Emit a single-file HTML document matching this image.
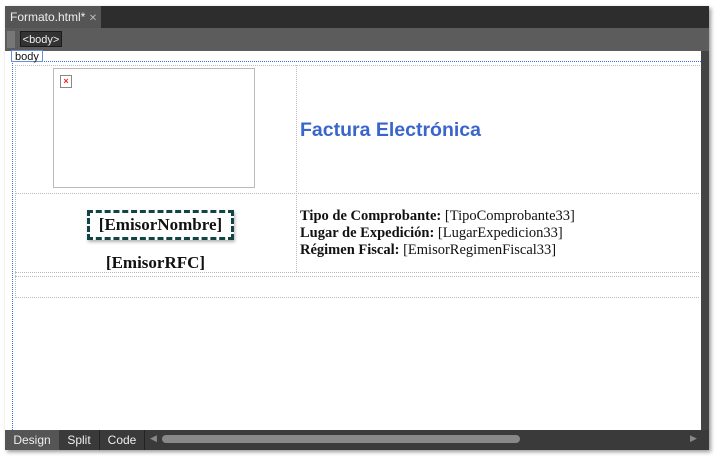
<!DOCTYPE html>
<html><head><meta charset="utf-8"><style>
body{margin:0;width:718px;height:459px;background:#fff;position:relative;overflow:hidden;font-family:"Liberation Sans",sans-serif}
.a{position:absolute}
.ser{font-family:"Liberation Serif",serif;color:#111}
</style></head><body>
<div class="a" style="left:5px;top:6px;width:704px;height:444px;background:#2d2d2d;box-shadow:2px 2px 4px rgba(0,0,0,.4)"></div>
<div class="a" style="left:5px;top:6px;width:96px;height:22px;background:#555;color:#eee;font-size:12px;line-height:22px;padding-left:5px;box-sizing:border-box">Formato.html* <span style="color:#bbb;font-size:10px">✕</span></div>
<div class="a" style="left:5px;top:28px;width:704px;height:23px;background:#5c5c5c"></div>
<div class="a" style="left:7px;top:31px;width:8px;height:17px;background:#777"></div>
<div class="a" style="left:20px;top:31px;width:42px;height:16px;background:#333;border:1px solid #1a1a1a;color:#eee;font-size:11px;line-height:16px;text-align:center;box-sizing:border-box">&lt;body&gt;</div>
<div class="a" style="left:5px;top:51px;width:696px;height:379px;background:#fff"></div>
<div class="a" style="left:701px;top:51px;width:8px;height:379px;background:#444"></div>
<div class="a" style="left:12px;top:61px;width:688px;height:370px;border-top:1px dotted #3a6fe0;border-left:1px dotted #3a6fe0"></div>
<div class="a" style="left:11px;top:50px;width:32px;height:12px;border:1px solid #6a8fd8;font-size:11px;line-height:12px;color:#111;padding-left:3px;box-sizing:border-box;background:#fff">body</div>
<div class="a" style="left:15px;top:65px;width:684px;height:232px;border-top:1px dotted #bbb;border-left:1px dotted #bbb"></div>
<div class="a" style="left:15px;top:193px;width:684px;border-top:1px dotted #bbb"></div>
<div class="a" style="left:15px;top:272px;width:684px;border-top:1px dotted #bbb"></div>
<div class="a" style="left:15px;top:276px;width:684px;border-top:1px dotted #bbb"></div>
<div class="a" style="left:15px;top:297px;width:684px;border-top:1px dotted #bbb"></div>
<div class="a" style="left:296px;top:65px;height:207px;border-left:1px dotted #bbb"></div>
<div class="a" style="left:53px;top:68px;width:202px;height:120px;border:1px solid #bbb;box-sizing:border-box"></div>
<div class="a" style="left:60px;top:75px;width:12px;height:13px;border:1px solid #888;box-sizing:border-box;color:#e22;font-size:9px;line-height:11px;text-align:center;font-weight:bold">×</div>
<div class="a" style="left:300px;top:119px;color:#3a66cc;font-weight:bold;font-size:19.5px">Factura Electrónica</div>
<div class="a ser" style="left:87px;top:210px;width:147px;height:30px;border:3px dashed #144;box-sizing:border-box;font-weight:bold;font-size:17px;line-height:24px;text-align:center;box-shadow:1px 2px 3px rgba(0,0,0,.3)">[EmisorNombre]</div>
<div class="a ser" style="left:15px;top:253px;width:281px;text-align:center;font-weight:bold;font-size:17px">[EmisorRFC]</div>
<div class="a ser" style="left:300px;top:208px;font-size:14.5px;line-height:17px"><b>Tipo de Comprobante:</b> [TipoComprobante33]<br><b>Lugar de Expedición:</b> [LugarExpedicion33]<br><b>Régimen Fiscal:</b> [EmisorRegimenFiscal33]</div>
<div class="a" style="left:5px;top:430px;width:704px;height:20px;background:#3a3a3a"></div>
<div class="a" style="left:5px;top:430px;width:54px;height:20px;background:#555;color:#eee;font-size:12px;line-height:20px;text-align:center">Design</div>
<div class="a" style="left:59px;top:430px;width:40px;height:20px;color:#eee;font-size:12px;line-height:20px;text-align:center;border-right:1px solid #222">Split</div>
<div class="a" style="left:100px;top:430px;width:44px;height:20px;color:#eee;font-size:12px;line-height:20px;text-align:center;border-right:1px solid #222">Code</div>
<div class="a" style="left:150px;top:433px;color:#888;font-size:9px">◀</div>
<div class="a" style="left:162px;top:435px;width:358px;height:8px;border-radius:4px;background:#888"></div>
<div class="a" style="left:690px;top:433px;color:#888;font-size:9px">▶</div>
</body></html>
